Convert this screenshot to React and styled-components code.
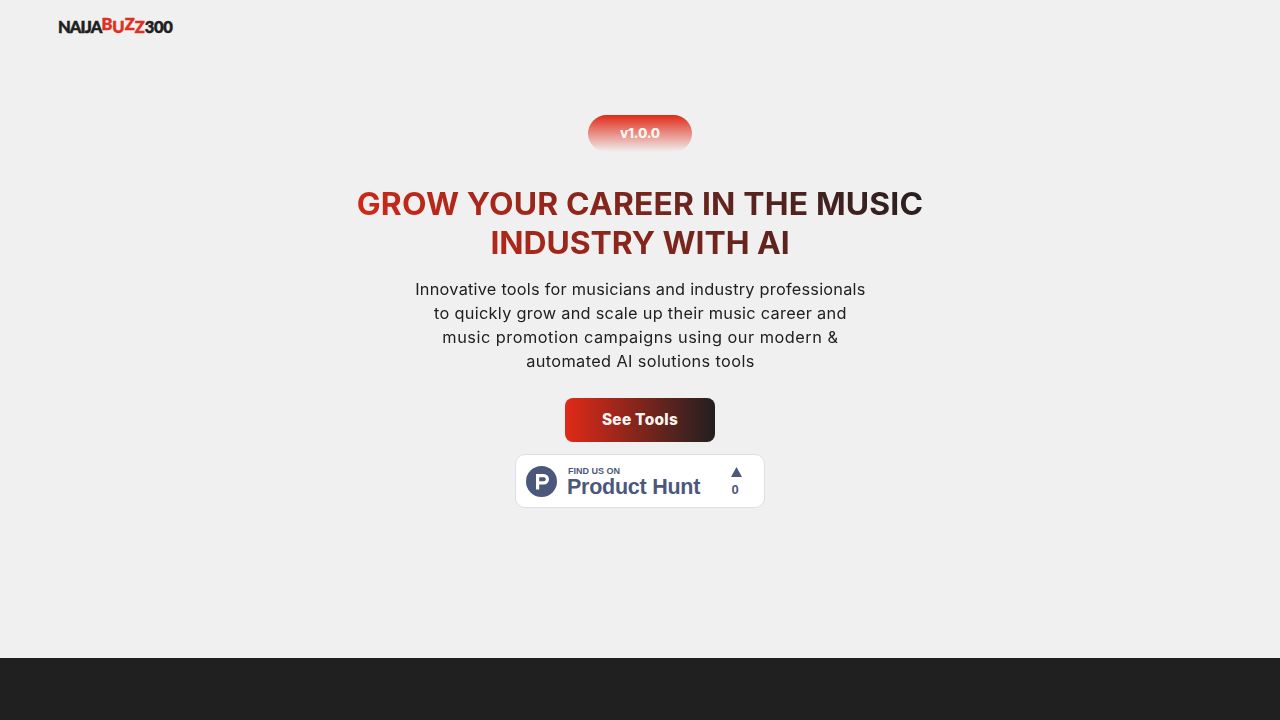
import React from 'react';
import styled, { createGlobalStyle } from 'styled-components';

const GlobalStyle = createGlobalStyle`
  * {
    box-sizing: border-box;
  }

  body {
    margin: 0;
    background-color: #f0f0f0;
    font-family: Inter, "Open Sans", sans-serif;
    color: #202020;
    overflow: hidden;
  }
`;

// Styled Components
const Page = styled.div`
  height: 720px;
  display: flex;
  flex-direction: column;
`;

const Header = styled.header`
  height: 54px;
  padding: 0 58px;
  display: flex;
  align-items: center;
`;

const Logo = styled.div`
  display: flex;
  font-family: Lato, sans-serif;
  font-size: 16.5px;
  font-weight: 900;
  line-height: 20px;
  color: #202020;
  -webkit-text-stroke: 0.5px;
`;

const LogoPart = styled.span`
  color: ${({ $red }) => ($red ? '#e02f20' : 'inherit')};
  letter-spacing: ${({ $spacing }) => $spacing || 0}px;
  transform: translateY(${({ $shift }) => $shift || 0}px);
`;

const Hero = styled.main`
  flex: 1;
  display: flex;
  flex-direction: column;
  align-items: center;
  padding-top: 61px;
`;

const Version = styled.div`
  width: 104px;
  height: 37px;
  border-radius: 19px;
  background: linear-gradient(180deg, #e02b18, #f0f0f0);
  color: #fff5f0;
  font-size: 13.5px;
  font-weight: 800;
  line-height: 36px;
  letter-spacing: -0.2px;
  text-align: center;
`;

const Heading = styled.h1`
  width: 556px;
  margin: 32px 0 0;
  background: linear-gradient(45deg, #e02a18, #202020);
  background-clip: text;
  -webkit-background-clip: text;
  color: transparent;
  font-size: 30.8px;
  font-weight: 700;
  line-height: 39px;
  text-align: center;
  transform: scaleX(1.035);
`;

const Text = styled.p`
  margin: 16px 0 0;
  font-size: 15.4px;
  line-height: 24px;
  text-align: center;
  transform: scaleX(1.06);
`;

const Line = styled.span`
  display: block;
  white-space: nowrap;
  letter-spacing: ${({ $spacing }) => $spacing}px;
`;

const ToolsButton = styled.button`
  width: 150px;
  height: 44px;
  margin-top: 24px;
  padding: 0 0 2px;
  border: none;
  border-radius: 8px;
  background: linear-gradient(90deg, #e02a18, #202020);
  color: #fff5f0;
  font-family: inherit;
  font-size: 15.4px;
  font-weight: 800;
  letter-spacing: 0.3px;
  cursor: pointer;
`;

const Badge = styled.a`
  width: 250px;
  height: 54px;
  margin-top: 12px;
  padding: 0 21px 0 10px;
  display: flex;
  align-items: center;
  border: 1px solid #dcdfe8;
  border-radius: 10px;
  background-color: #ffffff;
  color: #4b587c;
  font-family: "Liberation Sans", Arial, sans-serif;
  font-weight: 700;
`;

const BadgeText = styled.div`
  margin-left: 10px;
  padding-top: 2px;
`;

const BadgeLabel = styled.div`
  padding-left: 1px;
  font-size: 9px;
  line-height: 10px;
`;

const BadgeName = styled.div`
  font-size: 21.5px;
  line-height: 22px;
  letter-spacing: -0.25px;
`;

const Votes = styled.div`
  margin-left: auto;
  padding: 2px 1px 0 0;
  display: flex;
  flex-direction: column;
  align-items: center;
  gap: 5px;
  font-size: 13px;
  line-height: 15px;
`;

const VoteCount = styled.span`
  padding-right: 3px;
`;

const Footer = styled.footer`
  height: 62px;
  background-color: #202020;
`;

const headingLines = [
  { text: 'GROW YOUR CAREER IN THE MUSIC', spacing: 0.17 },
  { text: 'INDUSTRY WITH AI', spacing: -0.05 },
];

const textLines = [
  { text: 'Innovative tools for musicians and industry professionals', spacing: 0.22 },
  { text: 'to quickly grow and scale up their music career and', spacing: 0.27 },
  { text: 'music promotion campaigns using our modern &', spacing: 0.48 },
  { text: 'automated AI solutions tools', spacing: 0.36 },
];

function ProductHuntBadge() {
  return (
    <Badge>
      <svg width="31" height="31" viewBox="0 0 31 31">
        <circle cx="15.5" cy="15.5" r="15.5" fill="#4b587c" />
        <path
          fill="#ffffff"
          fillRule="evenodd"
          d="M10 8h7.8a5.2 5.2 0 0 1 0 10.4h-4.6v5H10zM13.2 11.2v4h4.6a2 2 0 0 0 0-4z"
        />
      </svg>
      <BadgeText>
        <BadgeLabel>FIND US ON</BadgeLabel>
        <BadgeName>Product Hunt</BadgeName>
      </BadgeText>
      <Votes>
        <svg width="11" height="10" viewBox="0 0 11 10">
          <path d="M5.5 0 11 10H0z" fill="#4b587c" />
        </svg>
        <VoteCount>0</VoteCount>
      </Votes>
    </Badge>
  );
}

function App() {
  return (
    <Page>
      <GlobalStyle />
      <Header>
        <Logo>
          <LogoPart $spacing={-0.9}>NAIJA</LogoPart>
          <LogoPart $red $shift={-3}>B</LogoPart>
          <LogoPart $red>U</LogoPart>
          <LogoPart $red $shift={-3}>Z</LogoPart>
          <LogoPart $red>Z</LogoPart>
          <LogoPart $spacing={-0.3}>300</LogoPart>
        </Logo>
      </Header>
      <Hero>
        <Version>v1.0.0</Version>
        <Heading>
          {headingLines.map((line) => (
            <Line key={line.text} $spacing={line.spacing}>{line.text}</Line>
          ))}
        </Heading>
        <Text>
          {textLines.map((line) => (
            <Line key={line.text} $spacing={line.spacing}>{line.text}</Line>
          ))}
        </Text>
        <ToolsButton type="button">See Tools</ToolsButton>
        <ProductHuntBadge />
      </Hero>
      <Footer />
    </Page>
  );
}

export default App;
